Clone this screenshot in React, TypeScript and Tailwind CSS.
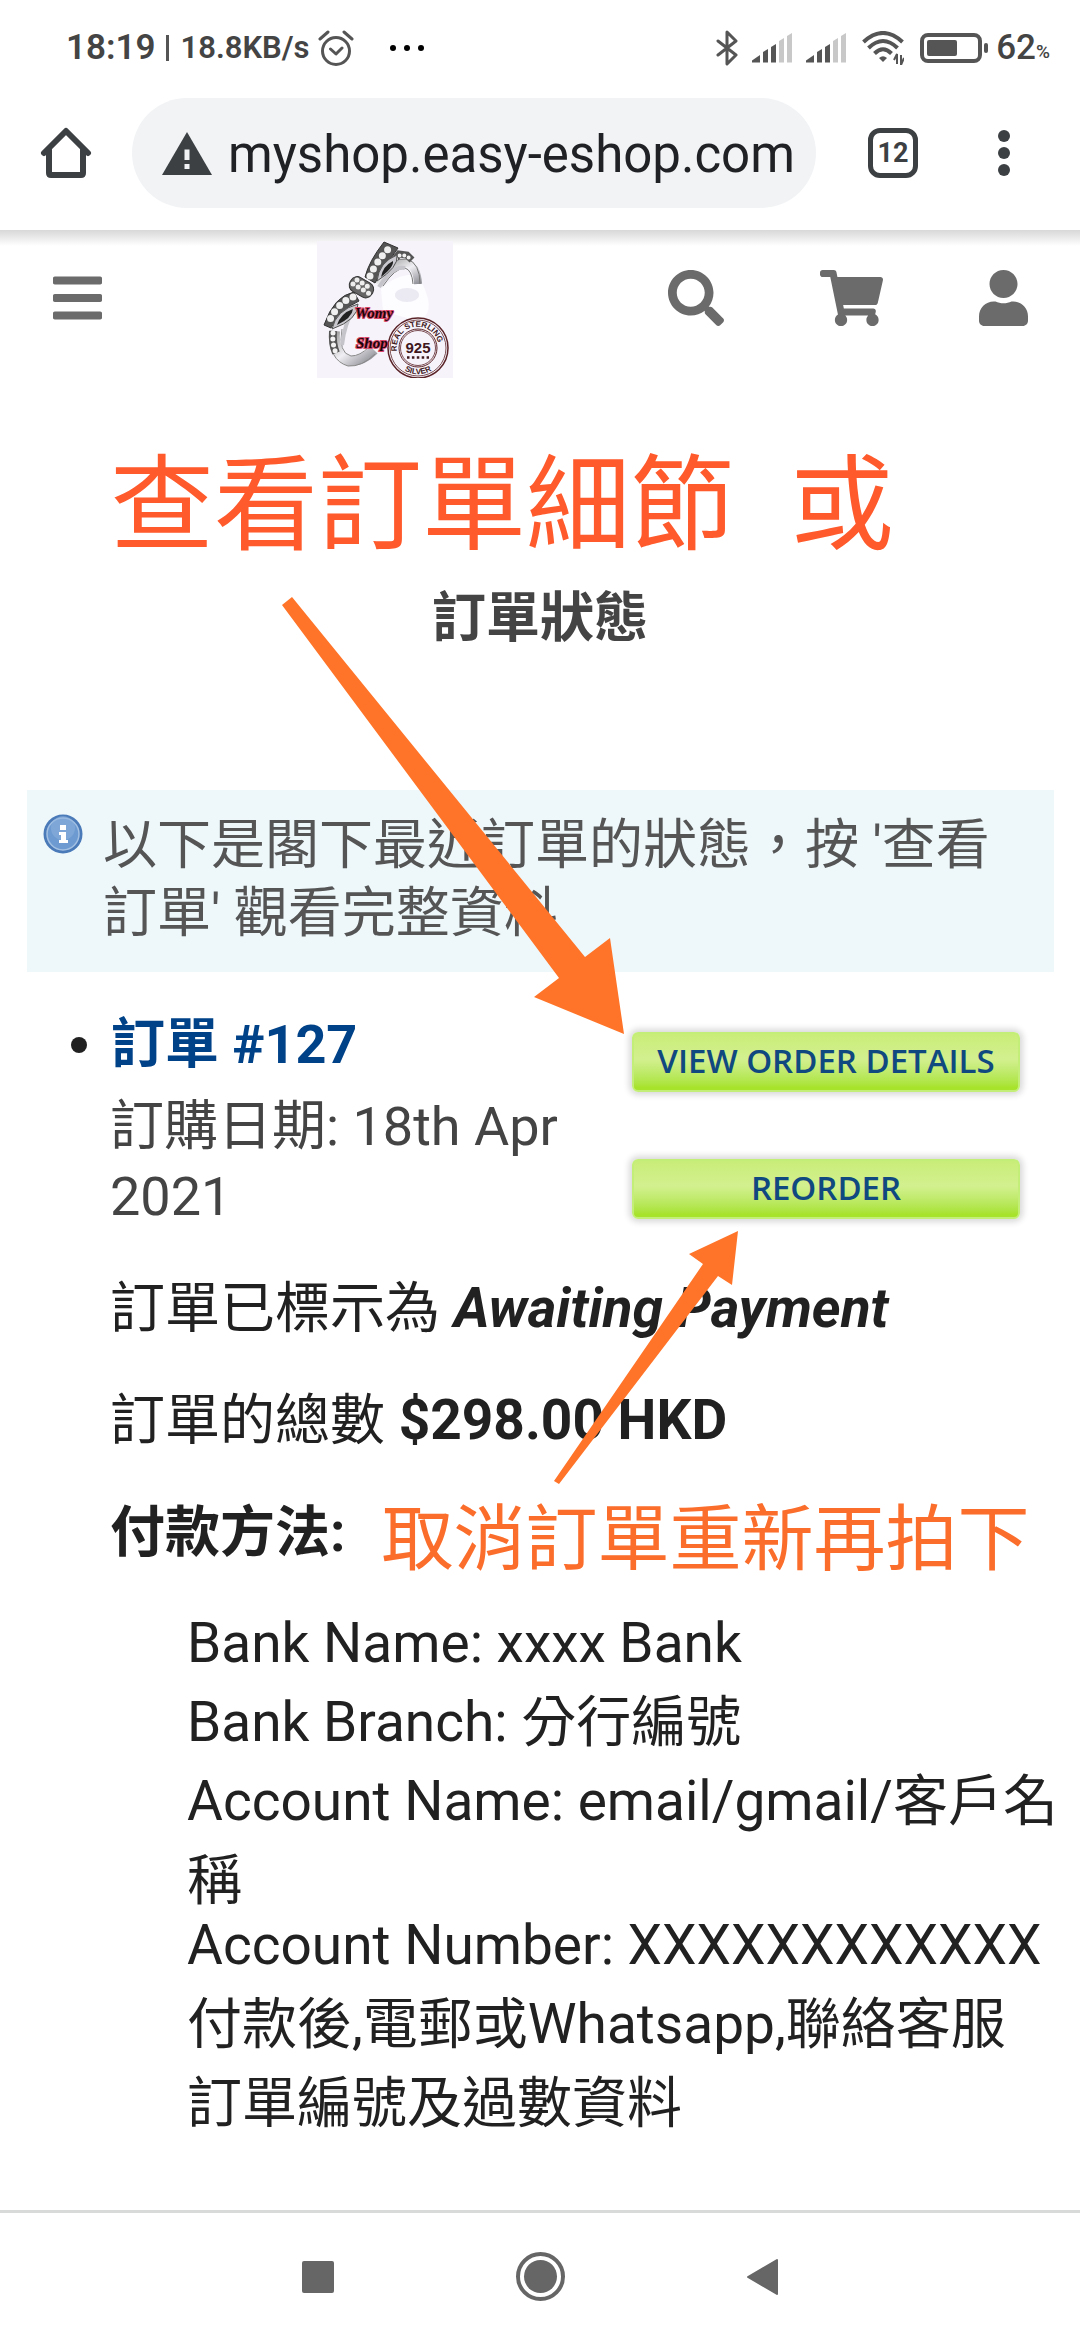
import { FaBars, FaSearch, FaShoppingCart, FaUser } from 'react-icons/fa';

const bankLines = [
  'Bank Name: xxxx Bank',
  'Bank Branch: 分行編號',
  'Account Name: email/gmail/客戶名稱',
];

const contactLines = [
  'Account Number: XXXXXXXXXXXX',
  '付款後,電郵或Whatsapp,聯絡客服',
  '訂單編號及過數資料',
];

function Signal() {
  return (
    <svg className="h-[30px] w-10" viewBox="0 0 40 30" fill="#555">
      <path d="M0 29.500v-2l8-5.500v7.500z" />
      <path d="M11 29.500V19l5-3v13.500z" />
      <path d="M19 29.500V14l5-3v18.500z" />
      <path d="M27 29.500V8l5-3v24.500z" fill="#c8c8c8" />
      <path d="M35 29.500V3l5-3v29.500z" fill="#c8c8c8" />
    </svg>
  );
}

function StatusBar() {
  return (
    <div className="flex h-24 items-center pr-[30px] pl-[66px] font-medium text-[#444]">
      <span className="text-[35px] font-semibold">18:19</span>
      <span className="ml-2.5 h-[26px] w-[3px] bg-[#555]" />
      <span className="ml-3 text-[31px] font-semibold">18.8KB/s</span>
      <svg className="ml-2 h-9 w-9" viewBox="0 0 36 36" fill="none" stroke="#555" strokeWidth="3">
        <circle cx="18" cy="21" r="13.500" />
        <path d="M12.500 19l5.500 5 6-6M2 9l8-7M34 9l-8-7" strokeLinecap="round" strokeLinejoin="round" />
      </svg>
      <div className="ml-9 flex gap-2">
        <span className="h-1.5 w-1.5 rounded-sm bg-black" />
        <span className="h-1.5 w-1.5 rounded-sm bg-black" />
        <span className="h-1.5 w-1.5 rounded-sm bg-black" />
      </div>
      <div className="ml-auto flex items-center">
        <svg className="h-9 w-[22px]" viewBox="0 0 22 36" fill="none" stroke="#555" strokeWidth="3" strokeLinejoin="round" strokeLinecap="round">
          <path d="M2 11l18 14-9 9V2l9 9L2 25" />
        </svg>
        <div className="ml-3.5 flex gap-3.5">
          <Signal />
          <Signal />
        </div>
        <svg className="ml-4 h-[34px] w-[42px]" viewBox="0 0 42 34" fill="none" stroke="#555" strokeWidth="4">
          <path d="M1.500 11Q21-7 40.500 11" />
          <path d="M6.500 17Q21 3 35.500 17" />
          <path d="M12.500 22.500Q21 14 29.500 22.500" />
          <path d="M17 27q4-3.500 8 0l-4 4z" fill="#555" stroke="none" />
          <path d="M35 33V23l-3 6M39 24v10l3-7" strokeWidth="2" />
        </svg>
        <svg className="ml-4 h-[30px] w-[68px]" viewBox="0 0 68 30" fill="none">
          <rect x="2" y="2" width="58" height="26" rx="6" stroke="#555" strokeWidth="4" />
          <rect x="7" y="7" width="30" height="16" rx="2" fill="#555" />
          <rect x="64" y="10" width="4" height="10" rx="2" fill="#555" />
        </svg>
        <span className="ml-2 text-[35px]">62</span>
        <span className="mt-2 text-[19px]">%</span>
      </div>
    </div>
  );
}

function BrowserBar() {
  return (
    <div className="flex items-center pt-0.5 pr-[68px] pb-[22px] pl-10">
      <button aria-label="Home">
        <svg className="h-[52px] w-[52px]" viewBox="0 0 52 52" fill="none" stroke="#3c4043" strokeWidth="6" strokeLinejoin="round" strokeLinecap="round">
          <path d="M4 26L26 4l22 22" />
          <path d="M9 23v23q0 2 2 2h30q2 0 2-2V23" />
        </svg>
      </button>
      <div className="ml-10 flex h-[110px] flex-1 items-center rounded-full bg-[#f1f3f5] pl-[30px]">
        <svg className="h-[43px] w-[50px] shrink-0" viewBox="0 0 50 43">
          <path d="M25 0l25 43H0z" fill="#3c4043" />
          <path d="M22.500 17.500h5V28h-5zM22.500 32h5v5h-5z" fill="#f1f3f5" />
        </svg>
        <input
          aria-label="Address"
          className="ml-4 w-full min-w-0 bg-transparent pt-1 text-[51px] text-[#202124] outline-none"
          defaultValue="myshop.easy-eshop.com"
        />
      </div>
      <button
        aria-label="Tabs"
        className="ml-[52px] flex h-[50px] w-[50px] items-center justify-center rounded-xl border-[5px] border-[#3c4043] text-[27px] font-bold text-[#3c4043]"
      >
        12
      </button>
      <button aria-label="Menu" className="ml-[78px] flex w-4 flex-col items-center gap-[5px]">
        <span className="h-3 w-3 rounded-full bg-[#3c4043]" />
        <span className="h-3 w-3 rounded-full bg-[#3c4043]" />
        <span className="h-3 w-3 rounded-full bg-[#3c4043]" />
      </button>
    </div>
  );
}

function ShopLogo() {
  return (
    <svg className="h-[137px] w-[136px]" viewBox="0 0 136 137">
      <defs>
        <linearGradient id="silver" x1="0" y1="0" x2="1" y2="1">
          <stop offset="0" stopColor="#999" />
          <stop offset="0.5" stopColor="#f0f0f4" />
          <stop offset="1" stopColor="#8a8a92" />
        </linearGradient>
        <path id="stampTop" d="M81 114a21 21 0 1 1 38 3" />
        <path id="stampBottom" d="M79 121a26 26 0 0 0 44 0" />
      </defs>
      <rect width="136" height="137" fill="#f6f4fa" />
      <path d="M64 48q16-16 36-14l6 10q14 30-6 36l-34-10z" fill="#fdfcff" />
      <ellipse cx="90" cy="54" rx="12" ry="7" fill="#ebe9f2" />
      {/* far side of the ring */}
      <path d="M62 44Q76 21 90 22q10 3 11 21" fill="none" stroke="url(#silver)" strokeWidth="8" />
      <path d="M57 42Q74 15 90 18q13 4 13 25M66 45q12-18 22-18 7 2 8 16" fill="none" stroke="#777" strokeWidth="1" />
      <path d="M78 18l4-5 8 1 5 5" fill="none" stroke="#555" strokeWidth="7" />
      <path d="M79 18l4-4 7 1 4 4" fill="none" stroke="#f2f2f2" strokeWidth="4" strokeLinecap="round" strokeDasharray="0 5" />
      {/* near side of the ring */}
      <path d="M18 90q-2 25 14 30 13 1 25-11" fill="none" stroke="url(#silver)" strokeWidth="10" />
      <path d="M13 90q-2 29 18 35 14 1 27-12M25 88q-4 24 9 27 9 0 18-9" fill="none" stroke="#888" strokeWidth="1" />
      <path d="M16 90q-1 13 3 22" fill="none" stroke="#555" strokeWidth="8" />
      <path d="M16 92q-1 11 3 20" fill="none" stroke="#f2f2f2" strokeWidth="5" strokeLinecap="round" strokeDasharray="0 6" />
      <path d="M38 64Q27 84 25 104M62 46Q76 24 88 27" fill="none" stroke="#c4c4ca" strokeWidth="4" />
      {/* bow */}
      <path d="M48 36Q52 20 67 1l14 6Q68 25 58 42z" fill="#555" stroke="#333" />
      <path d="M53 35Q59 21 73 6" fill="none" stroke="#f0f0f0" strokeWidth="7" strokeLinecap="round" strokeDasharray="0 8" />
      <path d="M60 40q2-19 20-26 2 12-20 26z" fill="#c9c9cf" stroke="#555" />
      <path d="M64 36q2-11 12-16 1 6-12 16z" fill="#222" />
      <path d="M37 51Q17 55 7 84l7 3Q22 69 42 60z" fill="#555" stroke="#333" />
      <path d="M36 56Q20 62 12 81" fill="none" stroke="#f0f0f0" strokeWidth="7" strokeLinecap="round" strokeDasharray="0 8" />
      <path d="M15 88q4-19 26-25 0 16-26 25z" fill="#c9c9cf" stroke="#555" />
      <path d="M20 84q4-12 16-16-1 9-16 16z" fill="#222" />
      <rect x="32" y="38" width="25" height="16" rx="7" transform="rotate(30 44 46)" fill="#666" stroke="#333" />
      <path d="M36 43l17 10M40 39l15 9" stroke="#eee" strokeWidth="5" strokeLinecap="round" strokeDasharray="0 6" />
      {/* stamp */}
      <g fill="none" stroke="#5a2328">
        <circle cx="101" cy="107" r="30" strokeWidth="1.500" />
        <circle cx="101" cy="107" r="28" strokeWidth="0.800" />
        <circle cx="101" cy="107" r="19" strokeWidth="1" />
        <circle cx="101" cy="107" r="17.500" strokeWidth="0.800" />
      </g>
      <g fill="#3f181d" className="font-['Liberation_Sans'] font-bold">
        <text x="101" y="112" fontSize="15" textAnchor="middle">925</text>
        <path d="M90 116.500h22" stroke="#3f181d" strokeWidth="2.500" strokeDasharray="2.500 2.400" />
        <text fontSize="8">
          <textPath href="#stampTop" startOffset="4">REAL STERLING</textPath>
        </text>
        <text fontSize="8" textAnchor="middle">
          <textPath href="#stampBottom" startOffset="50%">SILVER</textPath>
        </text>
      </g>
      <g
        className="font-['Liberation_Serif'] font-bold italic [paint-order:stroke]"
        fill="#1a0508"
        stroke="#d9486a"
        strokeWidth="2"
        fontSize="15"
      >
        <text x="38" y="77">Womy</text>
        <text x="39" y="107">Shop</text>
      </g>
    </svg>
  );
}

function ShopHeader() {
  return (
    <header className="flex items-start justify-between bg-linear-to-b from-[#d8d8d8] to-white to-[16px] pr-[52px] pl-[53px] text-[#6b6b6b]">
      <button aria-label="選單" className="pt-10">
        <FaBars className="h-14 w-[49px]" />
      </button>
      <a href="#" aria-label="Womy Shop" className="pt-[11px]">
        <ShopLogo />
      </a>
      <nav className="flex gap-24 pt-10">
        <a href="#" aria-label="搜尋"><FaSearch className="h-14 w-14" /></a>
        <a href="#" aria-label="購物車"><FaShoppingCart className="h-14 w-[63px]" /></a>
        <a href="#" aria-label="帳戶"><FaUser className="h-14 w-[49px]" /></a>
      </nav>
    </header>
  );
}

function InfoIcon() {
  return (
    <svg className="h-10 w-10 shrink-0" viewBox="0 0 40 40">
      <circle cx="20" cy="20" r="19.500" fill="#4a7ab8" />
      <circle cx="20" cy="20" r="16" fill="#6d9bd1" stroke="#a3c0e2" strokeWidth="1.500" />
      <circle cx="20" cy="14" r="12" fill="#8fb3df" opacity="0.5" />
      <path d="M17 11h6v5h-6zM16 18h7v8h2v3h-9v-3h2v-5h-2z" fill="#fff" />
    </svg>
  );
}

function GreenButton({ label }: { label: string }) {
  return (
    <button className="h-[60px] w-[388px] rounded-md border-2 border-[#c3ee78] bg-linear-to-b from-[#c9ed78] via-[#d3f08f] via-45% to-[#a8e32c] to-95% pb-1 font-['Open_Sans'] text-[33px] leading-none font-semibold text-[#10497f] shadow-[0_0_6px_3px_#d9d9d9]">
      {label}
    </button>
  );
}

function Arrows() {
  return (
    <svg className="pointer-events-none absolute top-0 left-0 h-[2340px] w-[1080px]" viewBox="0 0 1080 2340" fill="#ff7428">
      <path d="M282 605L292 597L585 957L610 938L624 1034L534 997L559 978Z" />
      <path d="M554 1481L703 1264L689 1254L738 1231L732 1285L718 1276L559 1484Z" />
    </svg>
  );
}

export default function App() {
  return (
    <div
      lang="zh-Hant"
      className="relative flex min-h-screen flex-col overflow-hidden bg-white font-[Roboto,'Noto_Sans_CJK_TC',sans-serif] text-[54px] text-[#212121]"
    >
      <StatusBar />
      <BrowserBar />
      <ShopHeader />

      <main className="flex-1">
        <p className="mt-16 ml-[110px] flex gap-14 text-[104px] leading-[130px] text-[#ff5a2b]">
          <span>查看訂單細節</span>
          <span>或</span>
        </p>
        <h1 className="mt-3 text-center leading-[70px] font-bold text-[#444]">訂單狀態</h1>

        <div className="mt-[136px] mr-[26px] ml-[27px] flex gap-5 bg-[#eef8fb] pt-[22px] pr-8 pb-6 pl-4">
          <div className="pt-0.5">
            <InfoIcon />
          </div>
          <p className="leading-[68px] text-[#555]">以下是閣下最近訂單的狀態，按 '查看訂單' 觀看完整資料</p>
        </div>

        <ul className="mt-[38px] pr-5 pl-[110px]">
          <li className="text-[55px]">
            <div className="flex justify-between pr-10 text-[54px]">
              <div className="w-[460px] leading-[70px]">
                <div className="-ml-[39px] flex items-center gap-6">
                  <span className="h-4 w-4 rounded-full bg-[#212121]" />
                  <a href="#" className="font-bold text-[#004288]">訂單 #127</a>
                </div>
                <p className="mt-3 text-[#444]">訂購日期: 18th Apr 2021</p>
              </div>
              <div className="flex flex-col gap-[67px] pt-[22px]">
                <GreenButton label="VIEW ORDER DETAILS" />
                <GreenButton label="REORDER" />
              </div>
            </div>
            <p className="mt-10 leading-[72px]">
              訂單已標示為 <b className="italic">Awaiting Payment</b>
            </p>
            <p className="mt-10 leading-[72px]">
              訂單的總數 <b>$298.00 HKD</b>
            </p>
            <div className="mt-10 flex items-start gap-9 leading-[72px]">
              <b>付款方法:</b>
              <span className="pt-2 text-[72px] text-[#fb6d2b]">取消訂單重新再拍下</span>
            </div>
            <div className="mt-7 ml-[77px] leading-[79px]">
              {bankLines.map((line) => (
                <p key={line}>{line}</p>
              ))}
            </div>
            <div className="-mt-3.5 ml-[77px] leading-[79px]">
              {contactLines.map((line) => (
                <p key={line}>{line}</p>
              ))}
            </div>
          </li>
        </ul>
      </main>

      <footer className="flex h-[130px] items-center justify-center gap-[182px] border-t-[3px] border-[#d8dad9]">
        <button aria-label="Recent apps" className="h-8 w-8 rounded-xs bg-[#666]" />
        <button aria-label="Home screen" className="h-[49px] w-[49px] rounded-full border-4 border-[#666] p-1">
          <span className="block h-full w-full rounded-full bg-[#666]" />
        </button>
        <button aria-label="Back">
          <svg className="h-[38px] w-8" viewBox="0 0 32 38">
            <path d="M30 2v34L1 19z" fill="#666" stroke="#666" strokeWidth="2" strokeLinejoin="round" />
          </svg>
        </button>
      </footer>
      <Arrows />
    </div>
  );
}
